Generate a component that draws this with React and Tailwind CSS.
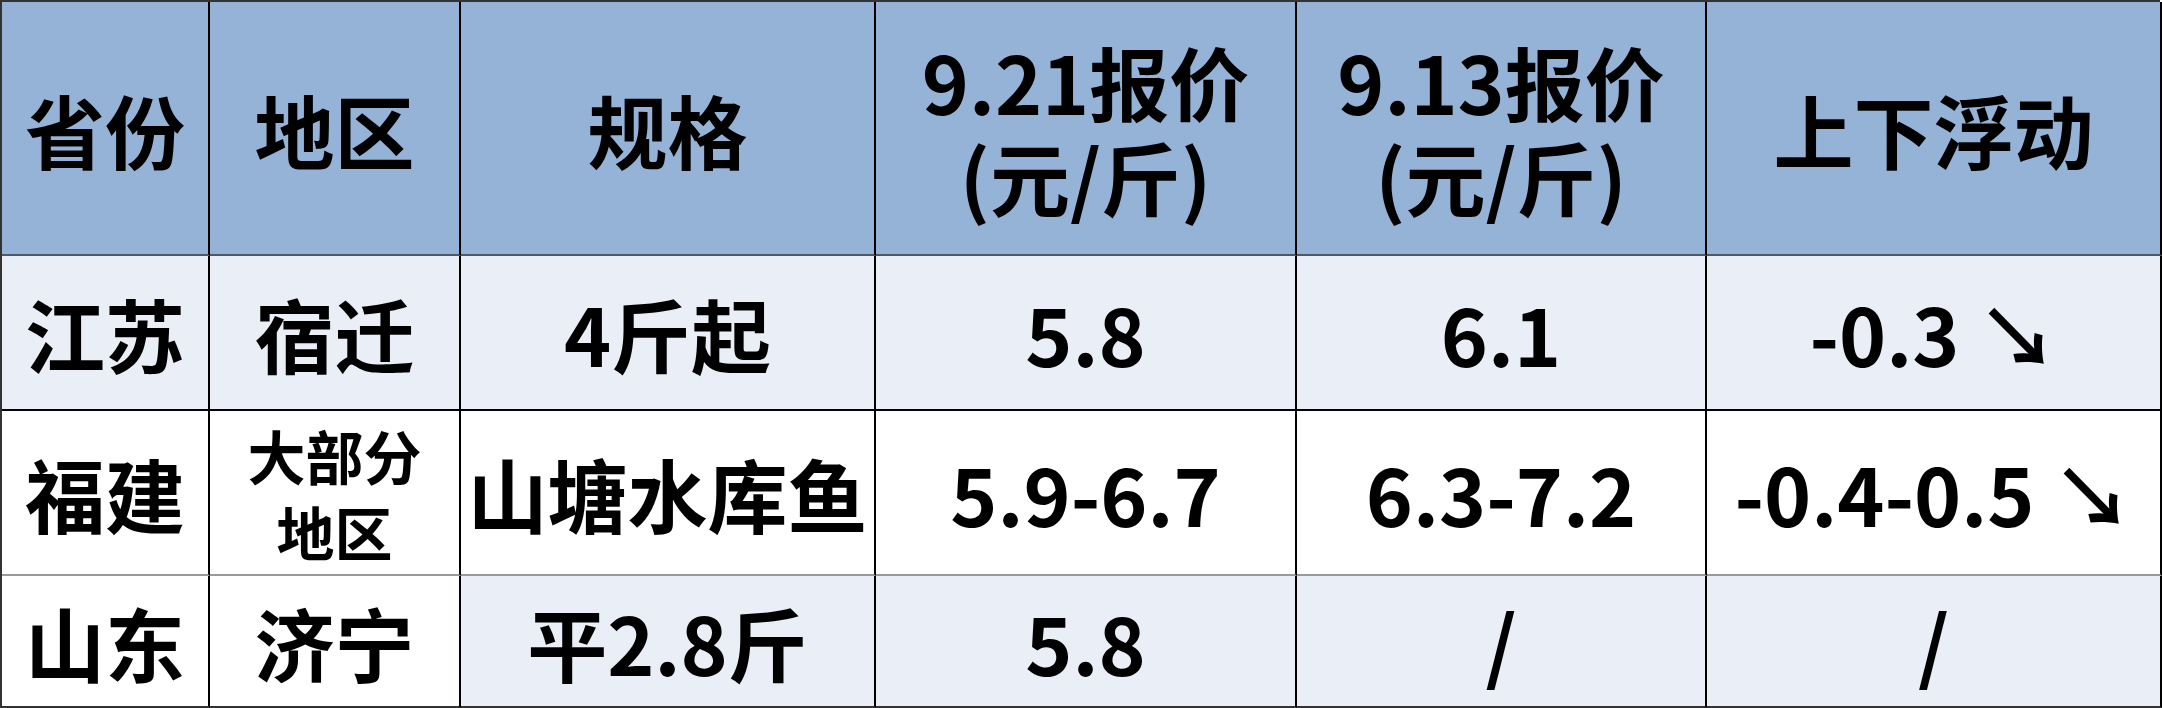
import React from "react";

const rows = [
  {
    bg: "bg-[#eaeff7]",
    line: "border-b-black",
    h: "h-[155px]",
    cells: ["江苏", "宿迁", "4斤起", "5.8", "6.1", "-0.3 ↘"],
  },
  {
    bg: "bg-white",
    line: "border-b-[#9a9a9a]",
    h: "h-[165px]",
    cells: ["福建", "大部分\n地区", "山塘水库鱼", "5.9-6.7", "6.3-7.2", "-0.4-0.5 ↘"],
  },
  {
    bg: "bg-[#eaeff7]",
    line: "border-b-[#333]",
    h: "h-[132px]",
    cells: ["山东", "济宁", "平2.8斤", "5.8", "/", "/"],
    whiteFirst: 2,
  },
];

const widths = ["w-[208px]", "w-[251px]", "w-[415px]", "w-[421px]", "w-[410px]", "w-[455px]"];

const headers = ["省份", "地区", "规格", "9.21报价\n(元/斤)", "9.13报价\n(元/斤)", "上下浮动"];

const Cell = ({ children, className }) => (
  <div
    className={`flex shrink-0 items-center justify-center border-r-2 border-r-black border-b-2 text-center whitespace-pre-line ${className}`}
  >
    {children}
  </div>
);

export default function App() {
  return (
    <div className="min-h-screen bg-white">
      <div className="w-[2160px] border-l-2 border-t-2 border-l-[#333] border-t-[#333] font-['Noto_Sans_CJK_SC','Noto_Sans',sans-serif] font-bold text-black">
        <div className="flex h-[254px]">
          {headers.map((h, i) => (
            <Cell
              key={i}
              className={`${widths[i]} bg-[#95b3d7] border-b-[#4d5966] text-[80px] leading-[95px]`}
            >
              {h}
            </Cell>
          ))}
        </div>
        {rows.map((r, ri) => (
          <div key={ri} className={`flex ${r.h}`}>
            {r.cells.map((c, ci) => {
              const bg = r.whiteFirst && ci < r.whiteFirst ? "bg-white" : r.bg;
              const small = c.includes("\n");
              return (
                <Cell
                  key={ci}
                  className={`${widths[ci]} ${bg} ${r.line} ${
                    small ? "text-[58px] leading-[76px]" : "text-[80px] leading-[95px]"
                  }`}
                >
                  {c}
                </Cell>
              );
            })}
          </div>
        ))}
      </div>
    </div>
  );
}
